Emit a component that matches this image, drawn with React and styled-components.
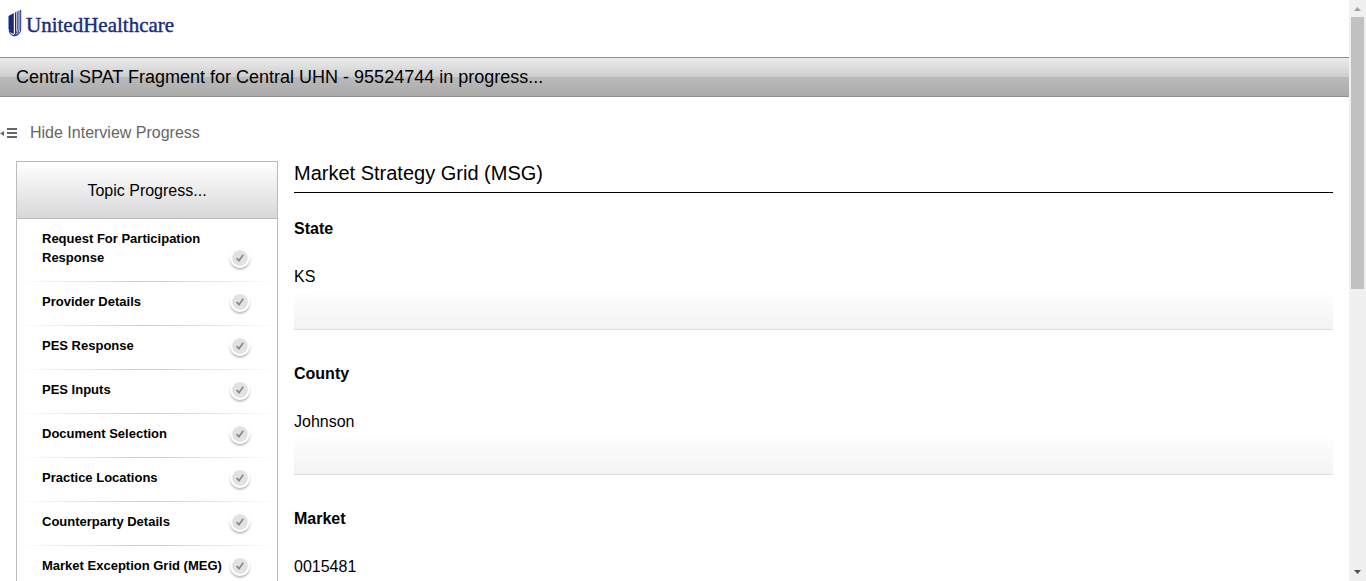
import React from 'react';
import styled, { createGlobalStyle } from 'styled-components';

const GlobalStyle = createGlobalStyle`
  * { box-sizing: border-box; }
  body {
    margin: 0;
    background: #fff;
    color: #000;
    font-family: "Liberation Sans", Arial, sans-serif;
    font-size: 16px;
    overflow: hidden;
  }
`;

const Shell = styled.div`
  display: flex;
  height: 100vh;
`;

const Page = styled.div`
  flex: 1;
  min-width: 0;
  overflow: hidden;
`;

const Brand = styled.header`
  display: flex;
  align-items: flex-start;
  gap: 4px;
  height: 57px;
  padding: 9px 8px 0;
  color: #1b2a7c;
`;

const BrandName = styled.span`
  font-family: "Liberation Serif", "Times New Roman", serif;
  font-size: 21px;
  line-height: 32px;
  -webkit-text-stroke: 0.4px currentColor;
`;

const TitleBar = styled.h1`
  margin: 0;
  padding: 0 16px;
  border: 1px solid #8f8f8f;
  border-width: 1px 0;
  background: linear-gradient(#ececec, #cdcdcd 50%, #bbb 50%, #aaa);
  font-size: 18px;
  font-weight: normal;
  line-height: 38px;
`;

const ToggleButton = styled.button`
  display: flex;
  align-items: center;
  gap: 12px;
  margin: 25px 0 17px;
  padding: 0;
  border: 0;
  background: none;
  color: #666;
  font: inherit;
  line-height: 22px;
  cursor: pointer;
`;

const Columns = styled.div`
  display: flex;
  align-items: flex-start;
  gap: 16px;
  padding: 0 16px;
`;

const Sidebar = styled.nav`
  flex: none;
  width: 262px;
  border: 1px solid #bbb;
`;

const SidebarTitle = styled.h2`
  margin: 0;
  padding-top: 2px;
  border-bottom: 1px solid #bbb;
  background: linear-gradient(#fff, #d8d8da);
  font-size: 16px;
  font-weight: normal;
  line-height: 54px;
  text-align: center;
`;

const TopicList = styled.ul`
  margin: 0;
  padding: 0;
  list-style: none;
`;

const Topic = styled.li`
  display: flex;
  align-items: flex-end;
  justify-content: space-between;
  padding: 10px 27px 13px 25px;
  border-bottom: 1px solid;
  border-image: linear-gradient(90deg, #fff, #ccc 50%, #fff) 1;
`;

const TopicName = styled.span`
  flex: none;
  width: 188px;
  padding-bottom: 1px;
  font-size: 13px;
  font-weight: bold;
  line-height: 19px;
`;

const TopicState = styled.span`
  display: flex;
  flex: none;
  align-items: center;
  justify-content: center;
  width: 20px;
  height: 20px;
  border: 2px solid #fff;
  border-radius: 50%;
  background: #e2e2e2;
  background-clip: padding-box;
  box-shadow: 0 2px 2px rgba(0, 0, 0, 0.25);
`;

const Content = styled.main`
  flex: 1;
  min-width: 0;
`;

const ContentTitle = styled.h2`
  margin: 0;
  padding-bottom: 7px;
  border-bottom: 1px solid #000;
  font-size: 20px;
  font-weight: normal;
  line-height: 24px;
`;

const Fields = styled.dl`
  margin: 0;
`;

const Field = styled.div`
  height: 137px;
  margin-bottom: 8px;
  padding-top: 26px;
  border-bottom: 1px solid #e0e0e0;
  background: linear-gradient(#fff, #f3f3f3) bottom / 100% 40px no-repeat;
`;

const FieldLabel = styled.dt`
  font-weight: bold;
  line-height: 20px;
`;

const FieldValue = styled.dd`
  margin: 28px 0 0;
  line-height: 20px;
`;

const ScrollTrack = styled.div`
  display: flex;
  flex: none;
  flex-direction: column;
  align-items: center;
  width: 17px;
  background: #f0f0f0;
`;

const ScrollArrow = styled.svg`
  flex: none;
  width: 17px;
  height: 17px;
`;

const ScrollSpace = styled.div`
  flex: 1;
  width: 13px;
`;

const ScrollThumb = styled.div`
  height: 50%;
  max-height: 272px;
  background: #c1c1c1;
`;

const topics = [
  'Request For Participation Response',
  'Provider Details',
  'PES Response',
  'PES Inputs',
  'Document Selection',
  'Practice Locations',
  'Counterparty Details',
  'Market Exception Grid (MEG)',
];

const fields = [
  { label: 'State', value: 'KS' },
  { label: 'County', value: 'Johnson' },
  { label: 'Market', value: '0015481' },
];

function Shield() {
  return (
    <svg width="14" height="28" viewBox="0 0 14 28" fill="none" aria-hidden="true">
      <path d="M.5 7 5.8 4v21C2 24 .5 22 .5 19Z" fill="currentColor" />
      <path d="M7.500 3.300V25M9.200 2.300V21.500Q9.200 24.500 6 26M11 1.500V20.500Q11 25.500 6 26.500M12.700.8V20Q12.700 26 6 27Q2 26 1 22" stroke="currentColor" strokeWidth="1" />
    </svg>
  );
}

function HideIcon() {
  return (
    <svg width="18" height="14" viewBox="0 0 18 14" fill="#666" aria-hidden="true">
      <path d="M0 7.500 4 5v5ZM7 2h10v2H7ZM7 6h10v2H7ZM7 10h10v2H7Z" />
    </svg>
  );
}

function CheckIcon() {
  return (
    <svg width="10" height="10" viewBox="0 0 10 10" fill="none" aria-hidden="true">
      <path d="M1.500 5 4 7.700 8.200 1.800" stroke="#888" strokeWidth="1.700" />
    </svg>
  );
}

export default function App() {
  return (
    <>
      <GlobalStyle />
      <Shell>
        <Page>
          <Brand>
            <Shield />
            <BrandName>UnitedHealthcare</BrandName>
          </Brand>
          <TitleBar>Central SPAT Fragment for Central UHN - 95524744 in progress...</TitleBar>
          <ToggleButton type="button">
            <HideIcon />
            Hide Interview Progress
          </ToggleButton>
          <Columns>
            <Sidebar aria-label="Topic progress">
              <SidebarTitle>Topic Progress...</SidebarTitle>
              <TopicList>
                {topics.map((name) => (
                  <Topic key={name}>
                    <TopicName>{name}</TopicName>
                    <TopicState>
                      <CheckIcon />
                    </TopicState>
                  </Topic>
                ))}
              </TopicList>
            </Sidebar>
            <Content>
              <ContentTitle>Market Strategy Grid (MSG)</ContentTitle>
              <Fields>
                {fields.map(({ label, value }) => (
                  <Field key={label}>
                    <FieldLabel>{label}</FieldLabel>
                    <FieldValue>{value}</FieldValue>
                  </Field>
                ))}
              </Fields>
            </Content>
          </Columns>
        </Page>
        <ScrollTrack aria-hidden="true">
          <ScrollArrow viewBox="0 0 17 17">
            <path d="M5 11h7L8.500 7Z" fill="#a3a3a3" />
          </ScrollArrow>
          <ScrollSpace>
            <ScrollThumb />
          </ScrollSpace>
          <ScrollArrow viewBox="0 0 17 17">
            <path d="M5 6h7L8.500 10Z" fill="#505050" />
          </ScrollArrow>
        </ScrollTrack>
      </Shell>
    </>
  );
}
